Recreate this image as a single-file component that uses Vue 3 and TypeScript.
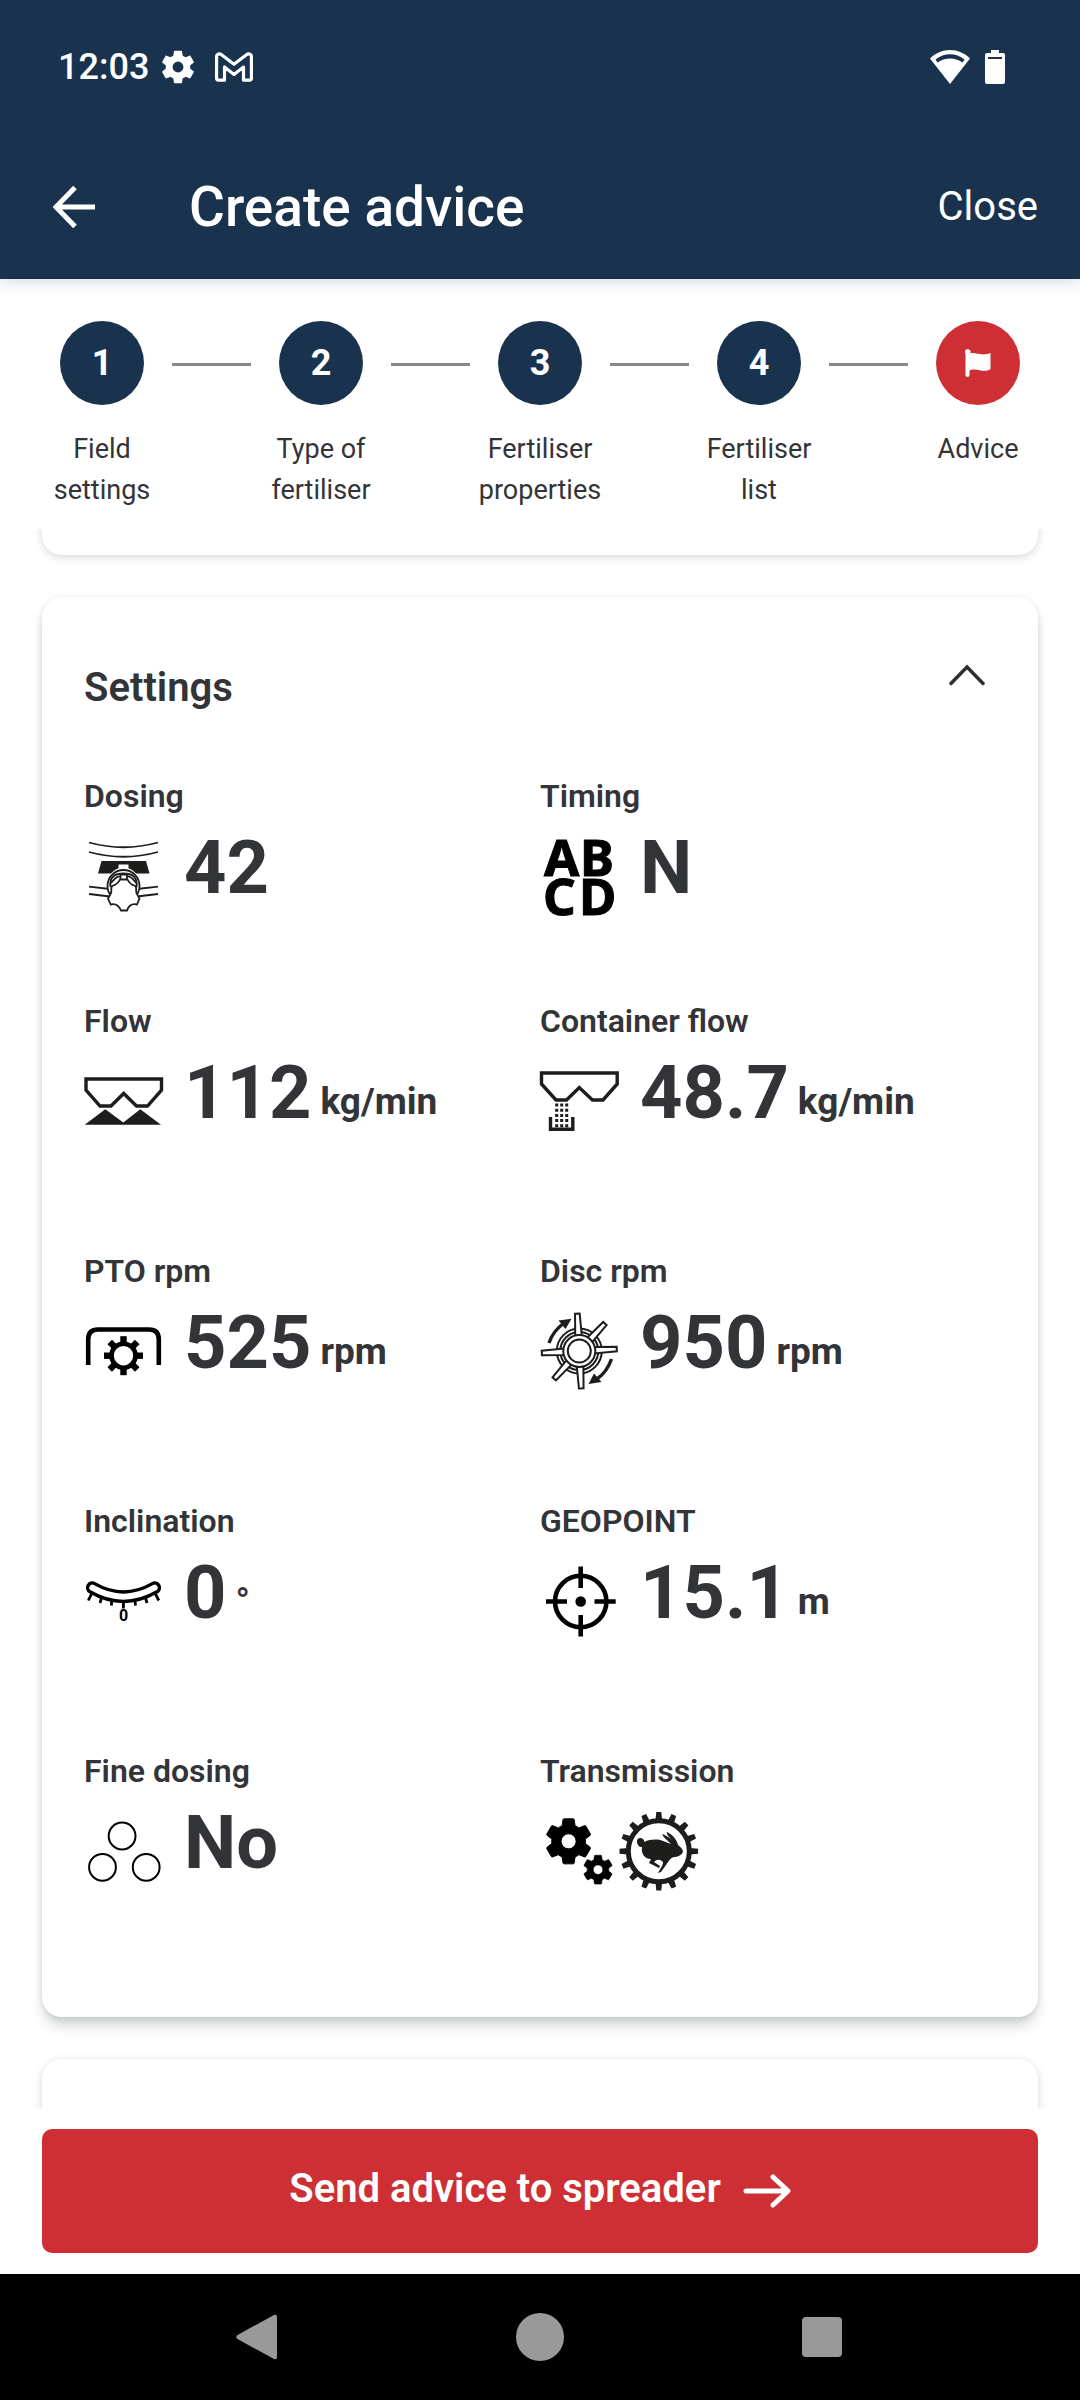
<script setup lang="ts">
import { ref } from 'vue'

interface Step {
  label: string
  active?: boolean
}

interface Setting {
  id: string
  label: string
  value?: string
  unit?: string
  compact?: boolean
}

const steps: Step[] = [
  { label: 'Field settings' },
  { label: 'Type of fertiliser' },
  { label: 'Fertiliser properties' },
  { label: 'Fertiliser list' },
  { label: 'Advice', active: true },
]

const settings: Setting[] = [
  { id: 'dosing', label: 'Dosing', value: '42', compact: true },
  { id: 'timing', label: 'Timing', value: 'N', compact: true },
  { id: 'flow', label: 'Flow', value: '112', unit: 'kg/min' },
  { id: 'container', label: 'Container flow', value: '48.7', unit: 'kg/min' },
  { id: 'pto', label: 'PTO rpm', value: '525', unit: 'rpm' },
  { id: 'disc', label: 'Disc rpm', value: '950', unit: 'rpm' },
  { id: 'inclination', label: 'Inclination', value: '0', unit: '°' },
  { id: 'geopoint', label: 'GEOPOINT', value: '15.1', unit: 'm' },
  { id: 'fine', label: 'Fine dosing', value: 'No' },
  { id: 'transmission', label: 'Transmission' },
]

const open = ref(true)

const bladeAngles = [-3, 43, 87, 177, 222, 267]
const eightTeeth = [0, 45, 90, 135, 180, 225, 270, 315]
const sixteenTeeth = Array.from({ length: 16 }, (_, i) => i * 22.5)

/* Material "settings" cog, reused for the status bar and the transmission icon */
const cog =
  'M19.14 12.94c.04-.3.06-.61.06-.94s-.02-.64-.07-.94l2.03-1.58c.18-.14.23-.41.12-.61l-1.92-3.32c-.12-.22-.37-.29-.59-.22l-2.39.96c-.5-.38-1.03-.7-1.62-.94l-.36-2.54c-.04-.24-.24-.41-.48-.41h-3.84c-.24 0-.43.17-.47.41l-.36 2.54c-.59.24-1.13.57-1.62.94l-2.39-.96c-.22-.08-.47 0-.59.22L2.74 8.87c-.12.21-.08.47.12.61l2.03 1.58c-.05.3-.09.63-.09.94s.02.64.07.94l-2.03 1.58c-.18.14-.23.41-.12.61l1.92 3.32c.12.22.37.29.59.22l2.39-.96c.5.38 1.03.7 1.62.94l.36 2.54c.05.24.24.41.48.41h3.84c.24 0 .44-.17.47-.41l.36-2.54c.59-.24 1.13-.56 1.62-.94l2.39.96c.22.08.47 0 .59-.22l1.92-3.32c.12-.22.07-.47-.12-.61l-2.01-1.58zM12 15.2a3.2 3.2 0 1 1 0-6.4 3.2 3.2 0 0 1 0 6.4z'
</script>

<template>
  <div class="app">
    <header class="top">
      <div class="status">
        <time class="clock">12:03</time>
        <svg class="status-cog" viewBox="2 2 20 20" aria-hidden="true"><path :d="cog" fill="#fff" /></svg>
        <svg class="status-mail" viewBox="0 0 36 28" aria-hidden="true">
          <path d="M1.500 25V4.500C1.500 1.500 4.500 1 6.200 2.400L18 11.500 29.800 2.400C31.500 1 34.500 1.500 34.500 4.500V25a1.500 1.500 0 0 1-1.500 1.500H27V14L18 21 9 14V26.500H3A1.500 1.500 0 0 1 1.500 25Z" fill="none" stroke="#fff" stroke-width="3" stroke-linejoin="round" />
        </svg>
        <span class="spacer"></span>
        <svg class="status-wifi" viewBox="0 0 40 34" aria-hidden="true">
          <path d="M20 0C12.500 0 5.500 3 0 8.500L20 34 40 8.500C34.500 3 27.500 0 20 0Z" fill="#fff" />
          <path d="M5.500 9.500C14 2.500 26 2.500 34.500 9.500L32.500 12.500C25 7 15 7 7.500 12.500Z" fill="#19334f" />
        </svg>
        <svg class="status-battery" viewBox="0 0 20 34" aria-hidden="true">
          <path d="M6 0h8v3h4a2 2 0 0 1 2 2v27a2 2 0 0 1-2 2H2a2 2 0 0 1-2-2V5a2 2 0 0 1 2-2h4Z" fill="#fff" />
          <path d="M3 7h14v2H3Z" fill="#19334f" />
        </svg>
      </div>
      <div class="toolbar">
        <button class="back" type="button" aria-label="Back">
          <svg viewBox="0 0 42 42" aria-hidden="true">
            <path d="M22 1.500 3 21 22 40.500M2.500 21H42" fill="none" stroke="#fff" stroke-width="5" />
          </svg>
        </button>
        <h1 class="title">Create advice</h1>
        <button class="close" type="button">Close</button>
      </div>
    </header>

    <ol class="steps">
      <template v-for="(step, i) in steps" :key="step.label">
        <li v-if="i > 0" class="connector" aria-hidden="true"></li>
        <li class="step">
          <span class="bubble" :class="{ active: step.active }">
            <svg v-if="step.active" class="flag" viewBox="0 0 26 28" aria-hidden="true">
              <path d="M2.500 2.500V26" stroke="#fff" stroke-width="4" stroke-linecap="round" />
              <circle cx="2.800" cy="3" r="2.800" fill="#fff" />
              <path d="M4 5C10 2 15 8 25.500 4V20C18 25 13 18 4 21.500Z" fill="#fff" />
            </svg>
            <template v-else>{{ i + 1 }}</template>
          </span>
          <span class="step-label">{{ step.label }}</span>
        </li>
      </template>
    </ol>

    <main class="scroller">
      <section class="card card-previous"></section>

      <section class="card card-settings">
        <div class="card-head">
          <h2>Settings</h2>
          <button class="toggle" type="button" aria-label="Toggle settings" :aria-expanded="open" @click="open = !open">
            <svg viewBox="0 0 36 24" aria-hidden="true">
              <path d="M2 19.500 18 3 34 19.500" fill="none" stroke="#2f3033" stroke-width="3.500" stroke-linecap="round" stroke-linejoin="miter" />
            </svg>
          </button>
        </div>

        <dl v-if="open" class="grid">
          <div v-for="item in settings" :key="item.id" class="cell" :class="{ compact: item.compact }">
            <dt>{{ item.label }}</dt>
            <dd>
              <svg v-if="item.id === 'dosing'" class="icon" viewBox="0 0 80 80" aria-hidden="true" fill="none" stroke="#1d1d1b" stroke-width="1.800">
                <path d="M5 5.500Q39.500 15 74 5.500M5 15Q39.500 24.500 74 15" />
                <path d="M5 49.700 26 52M5 57 26 59.500M53 52 74 49.700M53 59.500 74 57" />
                <path d="M17.500 24H62L65.500 36.500H52A16 16 0 0 0 27 36.500H14Z" fill="#1d1d1b" stroke="none" />
                <path d="M34.500 27.500h10v5h-10z" fill="#fff" stroke="none" />
                <circle cx="39.500" cy="49" r="16" fill="#fff" />
                <path d="M26.500 50C25 40 31 36.500 39.500 36.500S54 40 52.500 50" />
                <path d="M28 49C26 53 29 54 26 58L24 61.500 26.700 67.500C31 66.500 34.500 67.500 37 73.500H43C45 67.500 48.500 66.500 53 67.500L55.500 61.500 53.500 58C50.500 54 53.500 53 51.500 49 48 48 45.500 47 43.500 42.500H36C34 47 31.500 48 28 49Z" fill="#fff" />
                <path d="M36.500 42.500V37.500H43V42.500M36 39.500C32 39 29.500 44 26.500 46M43.500 39.500C47.500 39 50 44 52.500 46" />
              </svg>

              <svg v-else-if="item.id === 'timing'" class="icon" viewBox="0 0 80 80" aria-hidden="true">
                <g class="timing-letters">
                  <text x="4" y="38.500">A</text>
                  <text x="40" y="38.500">B</text>
                  <text x="3" y="77.500">C</text>
                  <text x="39" y="77.500">D</text>
                </g>
              </svg>

              <svg v-else-if="item.id === 'flow'" class="icon" viewBox="0 0 80 80" aria-hidden="true">
                <path d="M2 17H77.500V28L63.500 44H52.500L39.700 31.500 27 44H16L2 28Z" fill="none" stroke="#1d1d1b" stroke-width="3.400" />
                <path d="M.700 62.800 21.300 47.300 39.300 60.500 56.300 47.300 77 62.800Z" fill="#1d1d1b" />
              </svg>

              <svg v-else-if="item.id === 'container'" class="icon" viewBox="0 0 80 80" aria-hidden="true" fill="none" stroke="#1d1d1b" stroke-width="3.400">
                <path d="M1.500 11H77.200V22L63 38H52.500L39.300 25.500 26.500 38H16L1.500 22Z" />
                <path d="M10.500 55V67.200H32.800V55" />
                <path d="M16.700 41.500V66M21.700 41.500V66M26.700 41.500V66" stroke-width="3" stroke-dasharray="3 2.200" />
              </svg>

              <svg v-else-if="item.id === 'pto'" class="icon" viewBox="0 0 80 80" aria-hidden="true">
                <path d="M4.200 53V27.500Q4.200 17.500 14 17.500H65Q74.800 17.500 74.800 27.500V53" fill="none" stroke="#000" stroke-width="4.600" />
                <circle cx="39.500" cy="43.700" r="12" fill="none" stroke="#000" stroke-width="4.600" />
                <rect v-for="a in eightTeeth" :key="a" x="36.300" y="24.200" width="6.400" height="8" :transform="`rotate(${a} 39.500 43.700)`" />
              </svg>

              <svg v-else-if="item.id === 'disc'" class="icon" viewBox="0 0 80 80" aria-hidden="true">
                <g fill="#fff" stroke="#1d1d1b" stroke-width="2">
                  <circle cx="39.300" cy="39" r="22.500" />
                  <circle cx="39.300" cy="39" r="19" />
                  <path v-for="a in bladeAngles" :key="a" d="M36 24 37 1.500H41.600L42.600 24Z" :transform="`rotate(${a} 39.300 39)`" />
                  <circle cx="39.300" cy="39" r="16" />
                  <circle cx="39.300" cy="39" r="11.500" />
                </g>
                <path d="M9 31Q13 19 24 11M71.500 47Q67 60 57 67" fill="none" stroke="#1d1d1b" stroke-width="3.400" />
                <path d="M31.500 6.700 18.500 8.500 25.500 17ZM48.500 72 61.500 70 54 61.500Z" fill="#1d1d1b" />
              </svg>

              <svg v-else-if="item.id === 'inclination'" class="icon" viewBox="0 0 80 80" aria-hidden="true" fill="none" stroke="#000">
                <path d="M8.300 25.700Q39.300 43.700 70.700 25.700" stroke-width="12.800" stroke-linecap="round" />
                <path d="M8.300 25.700Q39.300 43.700 70.700 25.700" stroke="#fff" stroke-width="6" stroke-linecap="round" />
                <path d="M7.500 32 4.300 38.500M71.500 32 74.800 38.500M17.500 36 16 41M61.500 36 63 41M27.800 39 27.300 43.500M51 39 51.500 43.500M39.400 39V46.500" stroke-width="2.800" />
                <text class="inclination-mark" x="39.500" y="58.700">0</text>
              </svg>

              <svg v-else-if="item.id === 'geopoint'" class="icon" viewBox="0 0 80 80" aria-hidden="true">
                <g fill="none" stroke="#000" stroke-width="4.600">
                  <circle cx="40.700" cy="39.500" r="25.700" />
                  <path d="M40.700 4.500V26M40.700 53V74.500M6 39.500H27M54.500 39.500H75.700" />
                </g>
                <circle cx="40.700" cy="39.500" r="5.300" />
              </svg>

              <svg v-else-if="item.id === 'fine'" class="icon" viewBox="0 0 80 80" aria-hidden="true" fill="none" stroke="#000" stroke-width="2">
                <circle cx="38.100" cy="24" r="13.400" />
                <circle cx="18.500" cy="55.300" r="13.400" />
                <circle cx="62.200" cy="55.300" r="13.400" />
              </svg>

              <template v-else>
                <svg class="icon" viewBox="0 0 80 80" aria-hidden="true">
                  <path :d="cog" transform="translate(28.600 29.300) scale(2.350) translate(-12 -12)" stroke="#000" stroke-width=".4" />
                  <path :d="cog" transform="translate(58 57.700) scale(1.500) translate(-12 -12)" stroke="#000" stroke-width=".4" />
                </svg>
                <svg class="icon" viewBox="0 0 80 80" aria-hidden="true" fill="#1d1d1b">
                  <circle cx="38.800" cy="39.300" r="30.500" fill="none" stroke="#1d1d1b" stroke-width="5" />
                  <path v-for="a in sixteenTeeth" :key="a" d="M35.500 8 36.300 0H41.300L42.100 8Z" :transform="`rotate(${a} 38.800 39.300)`" />
                  <path d="M17 29C17 25 24 25 24.500 30 30 27 38 27 43 29L51 32C46 27 42 24 42.500 22 47 24 50 26 52 28 48 24 46 21 47 20 53 23 57 28 58 33 61 35 63 38 63 40 61 44 57 45 54 45 50 46 49 49 46 53L41 60 38 61C40 57 43 54 43 50 40 47 37 47 34 50L40 54 39 56 29 51 31 47C24 47 21 41 22 35 19 35 17 33 17 29Z" />
                </svg>
              </template>

              <span v-if="item.value" class="value">{{ item.value }}</span>
              <span v-if="item.unit" class="unit">{{ item.unit }}</span>
            </dd>
          </div>
        </dl>
      </section>

      <section class="card card-next"></section>
    </main>

    <footer class="action">
      <button class="send" type="button">
        <span class="send-label">Send advice to spreader</span>
        <svg viewBox="0 0 48 34" aria-hidden="true">
          <path d="M3 17H44M30 3 45 17 30 31" fill="none" stroke="#fff" stroke-width="5" stroke-linecap="round" stroke-linejoin="round" />
        </svg>
      </button>
    </footer>

    <nav class="system-nav" aria-label="System">
      <button type="button" aria-label="Back">
        <svg viewBox="0 0 48 48" aria-hidden="true"><path d="M43 4V44Q43 47 40 46L3.500 26Q1 24 3.500 22L40 2Q43 1 43 4Z" fill="#999" /></svg>
      </button>
      <button type="button" aria-label="Home">
        <svg viewBox="0 0 48 48" aria-hidden="true"><circle cx="24" cy="24" r="24" fill="#999" /></svg>
      </button>
      <button type="button" aria-label="Recent apps">
        <svg viewBox="0 0 48 48" aria-hidden="true"><rect x="4" y="4" width="40" height="40" rx="4" fill="#999" /></svg>
      </button>
    </nav>
  </div>
</template>

<style>
body {
  margin: 0;
  background: #fff;
}
</style>

<style scoped>
.app {
  display: flex;
  flex-direction: column;
  height: 100vh;
  background: #fff;
  color: #333438;
  font-family: Roboto, "Liberation Sans", sans-serif;
}

button {
  display: flex;
  align-items: center;
  justify-content: center;
  margin: 0;
  padding: 0;
  border: 0;
  background: none;
  color: inherit;
  font: inherit;
}

svg {
  display: block;
  flex: none;
}

.top {
  position: relative;
  z-index: 1;
  background: #19334f;
  color: #fff;
  box-shadow: 0 2px 14px rgba(25, 51, 79, 0.2);
}

.status {
  display: flex;
  align-items: center;
  height: 134px;
  padding: 0 75px 0 58px;
}

.clock {
  font-size: 36px;
  font-weight: 500;
}

.status-cog {
  width: 34px;
  height: 34px;
  margin-left: 12px;
}

.status-mail {
  width: 38px;
  height: 30px;
  margin-left: 20px;
}

.spacer {
  flex: 1;
}

.status-wifi {
  width: 40px;
  height: 34px;
}

.status-battery {
  width: 20px;
  height: 34px;
  margin-left: 15px;
}

.toolbar {
  display: flex;
  align-items: center;
  height: 145px;
  padding: 0 42px 0 53px;
}

.back svg {
  width: 42px;
  height: 42px;
}

.title {
  flex: 1;
  margin: 0 0 0 94px;
  font-size: 55px;
  font-weight: 500;
}

.close {
  font-size: 40px;
}

.steps {
  display: flex;
  align-items: flex-start;
  margin: 0;
  padding: 42px 32px 18px;
  list-style: none;
}

.step {
  display: flex;
  flex-direction: column;
  align-items: center;
  gap: 24px;
  width: 140px;
}

.connector {
  flex: 1;
  height: 3px;
  margin-top: 42px;
  background: #888;
}

.bubble {
  display: flex;
  align-items: center;
  justify-content: center;
  width: 84px;
  height: 84px;
  border-radius: 50%;
  background: #19334f;
  color: #fff;
  font-size: 36px;
  font-weight: 700;
}

.bubble.active {
  background: #ce2f34;
}

.flag {
  width: 26px;
  height: 28px;
}

.step-label {
  font-size: 27px;
  line-height: 41px;
  text-align: center;
}

.scroller {
  display: flex;
  flex: 1;
  flex-direction: column;
  gap: 42px;
  min-height: 0;
  padding: 0 42px;
  overflow: hidden;
}

.card {
  flex: none;
  border-radius: 20px;
  background: #fff;
  box-shadow: 0 2px 10px rgba(0, 0, 0, 0.16);
}

.card-previous {
  height: 66px;
  margin-top: -40px;
}

.card-settings {
  padding-bottom: 16px;
  box-shadow: 0 1px 6px rgba(0, 0, 0, 0.1), 0 10px 14px -2px rgba(20, 40, 35, 0.2);
}

.card-next {
  height: 100px;
}

.card-head {
  display: flex;
  align-items: flex-start;
  justify-content: space-between;
  padding: 67px 53px 64px 42px;
}

.card-head h2 {
  margin: 0;
  font-size: 40px;
  font-weight: 600;
  line-height: 48px;
}

.toggle svg {
  width: 36px;
  height: 24px;
}

.grid {
  display: grid;
  grid-template-columns: 1fr 1fr;
  margin: 0;
  padding: 0 42px;
}

.cell {
  padding-bottom: 109px;
}

.cell.compact {
  padding-bottom: 84px;
}

.cell dt {
  margin-bottom: 21px;
  font-size: 32px;
  font-weight: 600;
  line-height: 40px;
}

.cell dd {
  display: flex;
  align-items: flex-start;
  margin: 0;
}

.icon {
  width: 80px;
  height: 80px;
  overflow: visible;
}

.timing-letters {
  fill: #000;
  stroke: #000;
  stroke-width: 1;
  font-family: "Noto Sans", sans-serif;
  font-size: 51px;
  font-weight: 700;
}

.inclination-mark {
  fill: #000;
  stroke: none;
  font-size: 16px;
  font-weight: 700;
  text-anchor: middle;
}

.value {
  margin-left: 20px;
  font-size: 74px;
  font-weight: 700;
  line-height: 62px;
}

.unit {
  margin-left: 9px;
  font-size: 37px;
  font-weight: 700;
  line-height: 80px;
}

.action {
  padding: 21px 42px;
}

.send {
  gap: 22px;
  width: 100%;
  height: 124px;
  border-radius: 10px;
  background: #ce2f34;
  color: #fff;
  font-size: 40px;
  font-weight: 600;
}

.send-label {
  padding-bottom: 6px;
}

.send svg {
  width: 48px;
  height: 34px;
}

.system-nav {
  display: flex;
  justify-content: center;
  gap: 234px;
  height: 126px;
  background: #000;
}

.system-nav svg {
  width: 48px;
  height: 48px;
}
</style>
